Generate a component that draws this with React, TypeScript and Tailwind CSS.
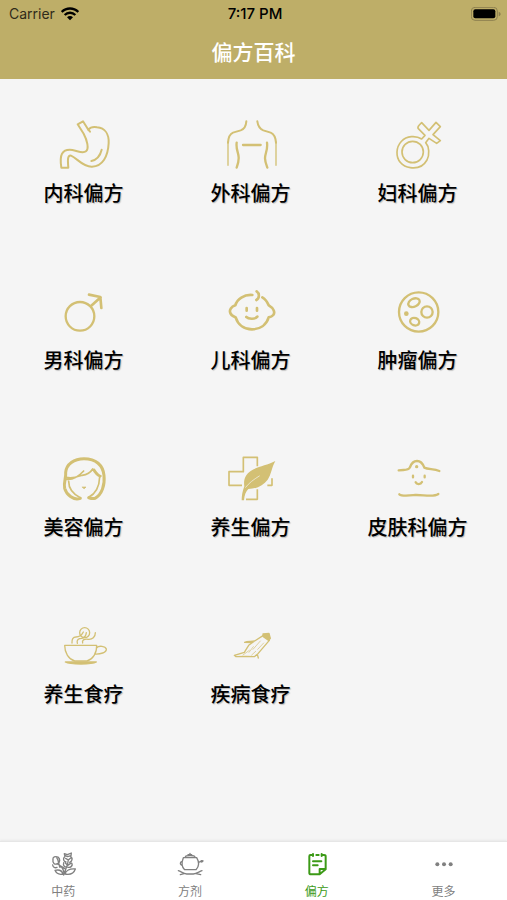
import React, { useState } from "react";

type IconProps = {
  viewBox: string;
  children: React.ReactNode;
}

const CategoryIcon = ({ viewBox, children }: IconProps) => (
  <svg
    viewBox={viewBox}
    className="size-15 text-[#d3c074]"
    fill="none"
    stroke="currentColor"
    strokeWidth="7"
    strokeLinecap="round"
    strokeLinejoin="round"
    aria-hidden="true"
  >
    {children}
  </svg>
);

const TabIcon = ({ viewBox, children }: IconProps) => (
  <svg
    viewBox={viewBox}
    className="size-7"
    fill="none"
    stroke="currentColor"
    strokeWidth="4"
    strokeLinecap="round"
    strokeLinejoin="round"
    aria-hidden="true"
  >
    {children}
  </svg>
);

const categories = [
  {
    name: "内科偏方",
    icon: (
      <CategoryIcon viewBox="72 15 180 180">
        <g strokeWidth="6">
          <path d="M143 43L159 34L175 59C180 53 190 50 201 52C226 54 237 74 236 99C234 139 218 169 186 170C158 171 142 145 123 137C112 135 113 151 115 173L94 173C91 153 91 140 96 131C102 121 113 118 127 120C144 123 158 132 168 124C178 116 171 90 161 71Z" />
          <path d="M175 59L180 65M215 119C211 136 201 149 184 153" />
        </g>
      </CategoryIcon>
    ),
  },
  {
    name: "外科偏方",
    icon: (
      <CategoryIcon viewBox="77 15 180 180">
        <path strokeWidth="6" d="M153 34C152 49 147 57 136 61L113 68C101 73 99 84 98 98M186 34C188 49 194 57 204 61L226 68C238 73 241 84 242 98" />
        <path strokeWidth="4" d="M98 96V166M242 96V166" />
        <path d="M143 105H196M124 98C121 120 131 129 130 145C130 155 127 165 124 173M215 98C218 120 209 129 209 145C209 155 213 165 216 173" />
      </CategoryIcon>
    ),
  },
  {
    name: "妇科偏方",
    icon: (
      <CategoryIcon viewBox="83 15 180 180">
        <g strokeWidth="5">
          <circle cx="157" cy="126" r="32" />
          <path d="M184 87L194 76L174 56C171 52 173 49 177 45L184 38L206 61L227 37L240 50L218 74L240 92L229 100L206 85L196 98C207 110 208 134 200 150C190 168 171 176 150 173C125 170 109 151 110 126C111 101 129 82 153 80C165 79 175 81 184 87Z" />
        </g>
      </CategoryIcon>
    ),
  },
  {
    name: "男科偏方",
    icon: (
      <CategoryIcon viewBox="72 6 180 180">
        <circle cx="150" cy="109" r="43" />
        <path strokeWidth="8" d="M183 78L212 52M177 44L211 51L214 84" />
      </CategoryIcon>
    ),
  },
  {
    name: "儿科偏方",
    icon: (
      <CategoryIcon viewBox="77 6 180 180">
        <g strokeWidth="8">
          <path d="M171 45C146 43 125 57 120 76C108 80 101 89 105 99C108 108 117 110 121 112C128 135 147 148 170 148C194 148 213 135 220 112C232 110 240 102 235 91C232 83 225 79 220 76C216 66 210 57 201 52" />
          <path d="M184 34C193 40 193 55 183 60M154 84V92M185 84V92M153 111C160 118 180 118 186 110" />
        </g>
      </CategoryIcon>
    ),
  },
  {
    name: "肿瘤偏方",
    icon: (
      <CategoryIcon viewBox="83 6 180 180">
        <circle cx="175" cy="96" r="59" />
        <ellipse cx="161" cy="68" rx="18" ry="12" transform="rotate(-25 161 68)" />
        <circle cx="200" cy="96" r="17" />
        <ellipse cx="163" cy="125" rx="14" ry="11" transform="rotate(20 163 125)" />
        <circle cx="138" cy="101" r="7" fill="currentColor" stroke="none" />
      </CategoryIcon>
    ),
  },
  {
    name: "美容偏方",
    icon: (
      <CategoryIcon viewBox="72 12 180 180">
        <path strokeWidth="9" d="M151 160C130 168 109 148 104 130C100 112 109 98 107 82C109 58 132 41 162 41C198 41 219 61 222 91C225 120 216 149 195 160C187 162 179 159 176 158" />
        <path strokeWidth="5" d="M109 103C130 106 146 94 161 78M109 97C127 102 141 96 156 91C170 89 182 82 188 72C195 85 202 92 211 95M116 109C116 132 132 149 151 158M209 96C208 127 195 147 176 157M193 73C201 86 206 91 213 93" />
        <path d="M157 126H168L163 131Z" fill="currentColor" strokeWidth="2" />
      </CategoryIcon>
    ),
  },
  {
    name: "养生偏方",
    icon: (
      <CategoryIcon viewBox="77 12 180 180">
        <path strokeWidth="5" strokeLinecap="butt" d="M186 64V37H144V80H101V121H140M216 121H230V100M186 133V163H152" />
        <path stroke="none" fill="currentColor" d="M240 48C214 62 186 64 166 78C149 90 144 106 147 124C141 139 139 153 139 166L146 166C147 150 152 139 159 132C182 132 204 122 217 104C228 88 229 67 240 48Z" />
        <path strokeWidth="2" className="text-[#f5f5f5]" d="M151 127C161 114 174 104 192 93" />
      </CategoryIcon>
    ),
  },
  {
    name: "皮肤科偏方",
    icon: (
      <CategoryIcon viewBox="83 12 180 180">
        <path d="M115 76C130 73 143 79 149 67C153 55 160 48 170 48C181 48 188 57 192 68C204 74 220 71 237 78" />
        <path d="M117 148C125 155 145 152 165 150C188 149 220 158 234 147" />
        <path d="M158 92V97M193 92V97M166 112C169 119 181 119 185 111" />
        <circle cx="169" cy="65" r="5" fill="currentColor" stroke="none" />
      </CategoryIcon>
    ),
  },
  {
    name: "养生食疗",
    icon: (
      <CategoryIcon viewBox="72 3 180 180">
        <g strokeWidth="4">
          <path d="M104 91H200C201 114 189 132 171 138H134C116 132 104 114 104 91ZM200 98C207 91 226 93 229 102C230 113 211 118 194 117" />
          <path d="M106 141H199C190 146 176 147 153 147C129 147 115 146 106 141Z" fill="currentColor" />
          <circle cx="164" cy="53" r="15" />
          <path d="M126 84C125 73 129 66 138 66C149 66 155 61 160 51M142 85C139 75 146 70 155 70C163 69 168 62 169 53M158 84C155 76 162 71 175 73C187 74 196 66 196 53" />
        </g>
      </CategoryIcon>
    ),
  },
  {
    name: "疾病食疗",
    icon: (
      <CategoryIcon viewBox="572 3 180 180">
        <g strokeWidth="4">
          <path d="M698 62L673 78L655 91L642 112L612 121L617 125L647 124L672 125L683 116L699 97L717 76M673 78C662 81 652 77 643 82L665 83M681 118L684 129" />
          <path strokeWidth="2" d="M657 106L638 120M669 95L656 112M690 78L668 103M700 84L682 103M676 109L664 120" />
          <path d="M698 57L716 55L720 70L715 76L698 64Z" fill="currentColor" />
        </g>
      </CategoryIcon>
    ),
  },
];

const tabs = [
  {
    name: "中药",
    icon: (
      <TabIcon viewBox="147 57 84 84">
        <path d="M191 132C196 116 204 104 205 86M192 126C190 112 182 103 171 98M180 109C174 98 178 91 170 80M159 86C157 78 166 75 174 78C181 84 181 93 173 98C164 102 157 96 159 86ZM158 102C159 109 165 112 171 109M189 129C177 132 169 127 165 118C178 115 186 119 189 129ZM195 129C197 119 209 112 226 114C222 126 210 132 195 129ZM193 68L202 71L214 66L213 74L203 77L194 73ZM195 76C188 83 190 92 198 93M211 75C219 82 217 91 209 94M197 82L205 87L212 81M191 95C188 104 195 110 202 108C210 112 220 105 215 96M196 96L203 103L212 97M184 106L194 113" />
      </TabIcon>
    ),
  },
  {
    name: "方剂",
    icon: (
      <TabIcon viewBox="527 57 84 84">
        <path d="M549 80C544 93 542 106 553 116H587C598 105 595 90 589 80ZM555 78C555 72 583 72 584 78M563 71H574M569 67V69M594 91C598 97 602 88 608 90M544 92C539 94 539 99 543 102M534 119C543 122 549 128 559 129H579C589 128 596 122 605 119M540 131L551 128M587 128L601 131" />
        <circle cx="604" cy="91" r="4" fill="currentColor" stroke="none" />
      </TabIcon>
    ),
  },
  {
    name: "偏方",
    icon: (
      <TabIcon viewBox="909 57 84 84">
        <path strokeWidth="6" d="M935 72H931C929 72 928 73 928 76V126C928 129 930 130 933 130H959L977 115V76C977 73 976 72 972 72H969M949 72H956M939 69V75M965 69V75M939 91H964M939 103H953M959 129V114H976" />
      </TabIcon>
    ),
  },
  {
    name: "更多",
    icon: (
      <TabIcon viewBox="1289 57 84 84">
        <g fill="currentColor" stroke="none">
          <circle cx="1311" cy="100" r="6" />
          <circle cx="1331" cy="100" r="6" />
          <circle cx="1351" cy="100" r="6" />
        </g>
      </TabIcon>
    ),
  },
];

const StatusBar = () => (
  <div className="grid grid-cols-3 items-center h-7 pl-[9px] pr-[6px] text-black font-[Inter,sans-serif]">
    <div className="flex items-center gap-1.5 text-sm text-[#302b1a]">
      <span>Carrier</span>
      <svg viewBox="0 0 54 42" className="w-[18px] h-[14px] text-black" fill="none" stroke="currentColor" strokeWidth="7" aria-hidden="true">
        <path d="M2 15C16 1 38 1 52 15M11 24C20 15 34 15 43 24" />
        <path d="M18 31C23 26 31 26 36 31L27 40Z" fill="currentColor" stroke="none" />
      </svg>
    </div>
    <span className="text-center text-[15px] font-medium">7:17 PM</span>
    <svg viewBox="0 0 90 42" className="w-[30px] h-[14px] justify-self-end" aria-hidden="true">
      <rect x="1" y="1" width="78" height="39" rx="11" fill="none" stroke="#8d8050" strokeWidth="3" />
      <rect x="7" y="7" width="66" height="27" rx="6" fill="#000" />
      <path d="M83 14C91 17 91 25 83 28Z" fill="#8d8050" />
    </svg>
  </div>
);

const App = () => {
  const [activeTab, setActiveTab] = useState("偏方");

  return (
    <div className="min-h-screen flex flex-col bg-[#f5f5f5] font-[Inter,'Noto_Sans_CJK_SC',sans-serif]">
      <header className="bg-[#beae68]">
        <StatusBar />
        <h1 className="pt-[11px] pb-3 text-center text-white text-[21px] leading-7 font-medium">
          偏方百科
        </h1>
      </header>

      <main className="flex-1 grid grid-cols-3 content-start pr-1.5">
        {categories.map((item) => (
          <button
            key={item.name}
            className="aspect-square flex flex-col items-center justify-start pt-9 gap-[5px] cursor-pointer"
          >
            {item.icon}
            <span className="text-xl leading-7 font-medium text-black text-shadow-[1px_1px_1px_#bbbbbb]">
              {item.name}
            </span>
          </button>
        ))}
      </main>

      <nav className="grid grid-cols-4 bg-white border-t border-[#e6e6e6] shadow-[0_-1px_2px_#e8e8e8]">
        {tabs.map((tab) => (
          <button
            key={tab.name}
            onClick={() => setActiveTab(tab.name)}
            className={`flex flex-col items-center pt-2 gap-1.5 cursor-pointer ${
              activeTab === tab.name ? "text-[#3c9a17]" : "text-[#808080]"
            }`}
          >
            {tab.icon}
            <span className="text-xs leading-4">{tab.name}</span>
          </button>
        ))}
      </nav>
    </div>
  );
};

export default App;
